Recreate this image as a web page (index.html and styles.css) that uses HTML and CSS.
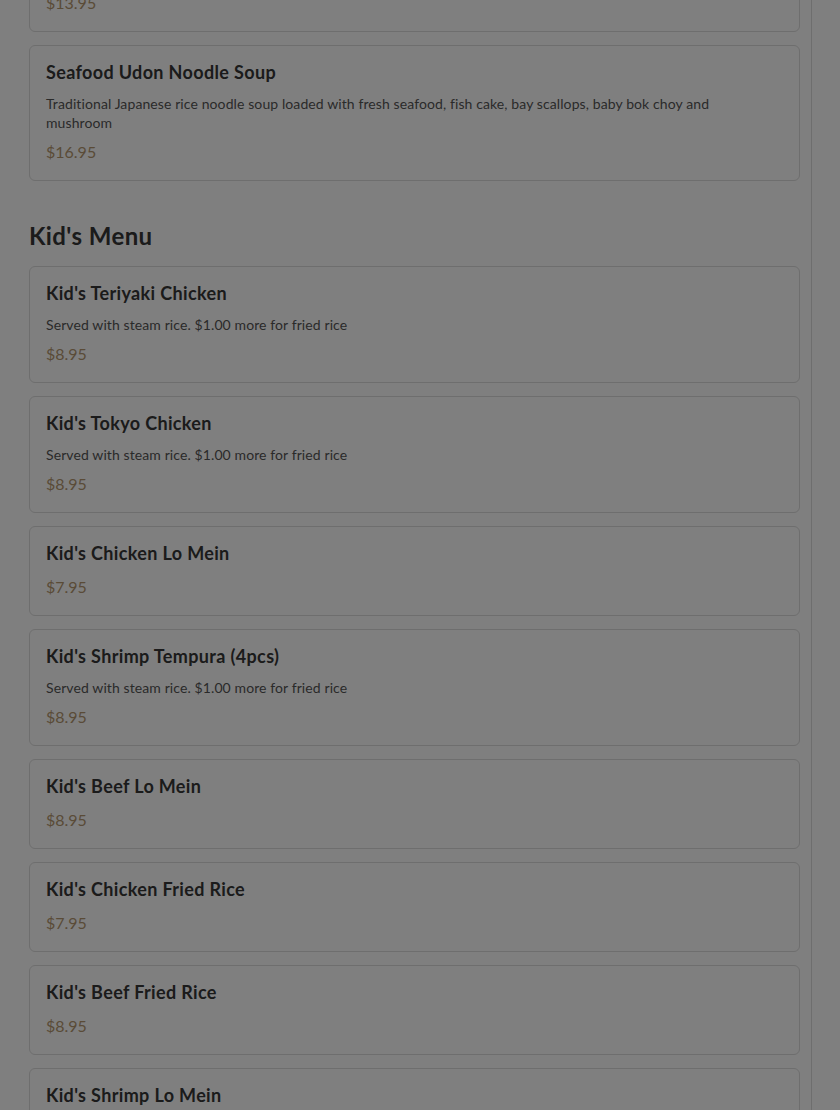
FILE: index.html
```html
<!DOCTYPE html>
<html lang="en">
<head>
    <meta charset="UTF-8">
    <meta name="viewport" content="width=device-width, initial-scale=1.0">
    <title>Menu</title>
    <link rel="stylesheet" href="styles.css">
</head>
<body>

    <div class="page">
        <main class="menu">

            <div class="menu-list menu-list-top">
                <div class="menu-item">
                    <p class="item-price">$13.95</p>
                </div>

                <div class="menu-item">
                    <h3 class="item-name">Seafood Udon Noodle Soup</h3>
                    <p class="item-desc">Traditional Japanese rice noodle soup loaded with fresh seafood, fish cake, bay scallops, baby bok choy and mushroom</p>
                    <p class="item-price">$16.95</p>
                </div>
            </div>

            <section class="menu-section">
                <h2 class="section-title">Kid's Menu</h2>

                <div class="menu-list">
                    <div class="menu-item">
                        <h3 class="item-name">Kid's Teriyaki Chicken</h3>
                        <p class="item-desc">Served with steam rice. $1.00 more for fried rice</p>
                        <p class="item-price">$8.95</p>
                    </div>

                    <div class="menu-item">
                        <h3 class="item-name">Kid's Tokyo Chicken</h3>
                        <p class="item-desc">Served with steam rice. $1.00 more for fried rice</p>
                        <p class="item-price">$8.95</p>
                    </div>

                    <div class="menu-item">
                        <h3 class="item-name">Kid's Chicken Lo Mein</h3>
                        <p class="item-price">$7.95</p>
                    </div>

                    <div class="menu-item">
                        <h3 class="item-name">Kid's Shrimp Tempura (4pcs)</h3>
                        <p class="item-desc">Served with steam rice. $1.00 more for fried rice</p>
                        <p class="item-price">$8.95</p>
                    </div>

                    <div class="menu-item">
                        <h3 class="item-name">Kid's Beef Lo Mein</h3>
                        <p class="item-price">$8.95</p>
                    </div>

                    <div class="menu-item">
                        <h3 class="item-name">Kid's Chicken Fried Rice</h3>
                        <p class="item-price">$7.95</p>
                    </div>

                    <div class="menu-item">
                        <h3 class="item-name">Kid's Beef Fried Rice</h3>
                        <p class="item-price">$8.95</p>
                    </div>

                    <div class="menu-item">
                        <h3 class="item-name">Kid's Shrimp Lo Mein</h3>
                        <p class="item-price">$8.95</p>
                    </div>
                </div>
            </section>

        </main>
    </div>

    <div class="backdrop"></div>

</body>
</html>
```

FILE: styles.css
```css
:root {
    --text-color: #363636;
    --muted-color: #555;
    --price-color: #b4976f;
    --border-color: #dcdcdc;
    --background-color: #fff;
}

html, body {
    margin: 0;
    padding: 0;
    height: 100%;
    overflow: hidden;
}

body {
    font-family: 'Lato', 'Noto Sans', sans-serif;
    background-color: var(--background-color);
    color: var(--text-color);
}

.page {
    width: 811px;
    min-height: 100%;
    border-right: 1px solid var(--border-color);
}

.menu {
    padding: 0 11px 0 29px;
}

.menu-list {
    display: flex;
    flex-direction: column;
    gap: 13px;
}

.menu-list-top {
    margin-top: -23px;
}

.menu-section {
    margin-top: 40px;
}

.section-title {
    font-size: 24px;
    line-height: 30px;
    font-weight: 700;
    letter-spacing: 0.4px;
    margin: 0 0 15px;
    color: var(--text-color);
}

.menu-item {
    border: 1px solid var(--border-color);
    border-radius: 6px;
    padding: 13px 16px 16px;
    display: flex;
    flex-direction: column;
    gap: 8px;
}

.item-name {
    font-size: 18px;
    line-height: 27px;
    font-weight: 700;
    letter-spacing: 0.35px;
    margin: 0;
    color: var(--text-color);
}

.item-desc {
    max-width: 700px;
    font-size: 14px;
    line-height: 19px;
    letter-spacing: 0.1px;
    margin: 0;
    color: var(--muted-color);
}

.item-price {
    font-size: 16px;
    line-height: 24px;
    margin: 0;
    color: var(--price-color);
}

.backdrop {
    position: fixed;
    inset: 0;
    background-color: rgba(0, 0, 0, 0.5);
}
```
